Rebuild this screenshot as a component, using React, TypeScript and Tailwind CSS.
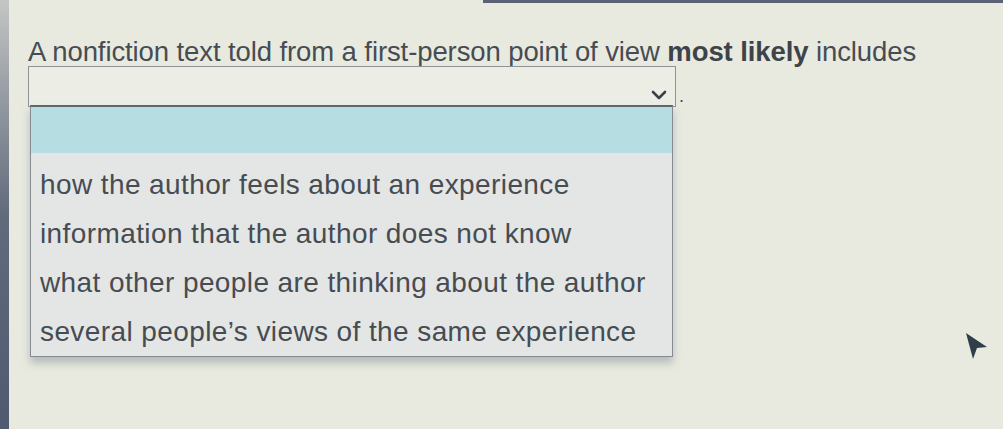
import React from "react";

const options = [
  "how the author feels about an experience",
  "information that the author does not know",
  "what other people are thinking about the author",
  "several people\u2019s views of the same experience",
];

function Chevron() {
  return (
    <svg width="16" height="10" viewBox="0 0 16 10" className="block">
      <path d="M2 2 L8 8 L14 2" fill="none" stroke="#3b4148" strokeWidth="2.6" strokeLinecap="round" strokeLinejoin="round" />
    </svg>
  );
}

function Pointer() {
  return (
    <svg width="28" height="30" viewBox="0 0 28 30" className="block">
      <path d="M3 2 L24 16 L14 17 L10 28 Z" fill="#2f3f4a" />
    </svg>
  );
}

export default function App() {
  return (
    <div
      className="relative flex h-[429px] w-[1003px] overflow-hidden bg-[#e8eadf] text-[#474c53]"
      style={{ fontFamily: '"Liberation Sans", Arial, sans-serif' }}
    >
      {/* bezel edge */}
      <div className="h-full w-[9px] shrink-0 bg-gradient-to-b from-[#c4c6c4] via-[#626b7c] to-[#4f5a70]" />
      <div className="absolute right-0 top-0 h-[3px] w-[520px] bg-[#5b6275]" />

      <div className="flex flex-col pl-[19px] pt-[37px]">
        <p className="whitespace-nowrap text-[27.5px] leading-[30px] tracking-[-0.1px]">
          A nonfiction text told from a first-person point of view{" "}
          <span className="font-bold text-[#3e434a]">most likely</span> includes
        </p>

        <div className="relative -mt-[1px] flex items-end">
          <div className="flex h-[41px] w-[648px] items-end justify-end border border-[#8e9396] bg-[#eceee6] pb-[6px] pr-[8px]">
            <Chevron />
          </div>
          <span className="mb-[2px] ml-[3px] text-[18px] leading-none">.</span>

          {/* open option list */}
          <div className="absolute left-[2px] top-[39px] w-[643px] border border-t-2 border-[#858b90] border-t-[#5f666d] bg-[#e3e6e4] pt-[7px] shadow-[0_6px_8px_rgba(90,100,120,0.35)]">
            <div className="-mt-[7px] mb-[7px] h-[46px] bg-[#b6dde2]" />
            {options.map((o) => (
              <div key={o} className="flex h-[49px] items-center whitespace-nowrap pl-[9px] text-[28px] tracking-[0.4px]">
                {o}
              </div>
            ))}
          </div>
        </div>
      </div>

      <div className="absolute left-[963px] top-[331px]">
        <Pointer />
      </div>
    </div>
  );
}
